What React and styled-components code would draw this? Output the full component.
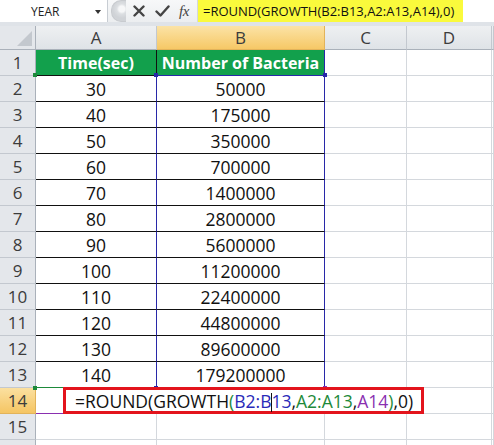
import React from "react";
import styled, { createGlobalStyle, css } from "styled-components";

const Global = createGlobalStyle`
  html, body { margin: 0; padding: 0; background: #fff; }
  body { width: 494px; height: 445px; overflow: hidden; font-family: "Open Sans", "Liberation Sans", sans-serif; }
`;

const Page = styled.div`
  width: 494px;
  height: 445px;
  overflow: hidden;
  display: flex;
  flex-direction: column;
  background: #fff;
`;

const FormulaBar = styled.div`
  height: 24px;
  display: flex;
  align-items: stretch;
  background: #fff;
  border-bottom: 4px solid #dfe3e8;
`;

const NameBox = styled.div`
  width: 108px;
  display: flex;
  align-items: center;
  justify-content: space-between;
  padding: 0 6px 0 31px;
  box-sizing: border-box;
  font-size: 12px;
  color: #222;
  background: #fff;
  border-right: 1px solid #c8cdd3;
`;

const Arrow = styled.span`
  width: 0;
  height: 0;
  border-left: 3.5px solid transparent;
  border-right: 3.5px solid transparent;
  border-top: 4px solid #333;
  margin-top: 2px;
`;

const Tools = styled.div`
  width: 89px;
  display: flex;
  align-items: center;
  background: linear-gradient(#f7f8f9, #eceef0);
  border-right: 1px solid #d4d8dc;
`;

const Knob = styled.div`
  width: 14px;
  height: 20px;
  margin-left: 3px;
  border-radius: 10px 0 0 10px;
  background: radial-gradient(circle at 70% 40%, #f6f7f8 0 3px, #dcdfe2 5px, #d0d3d7 9px);
  border: 1px solid #c8cbcf;
  border-right: none;
`;

const ToolIcon = styled.span`
  width: ${(p) => p.$w || 20}px;
  display: flex;
  align-items: center;
  justify-content: center;
  color: #444;
`;

const Fx = styled.span`
  font-family: "Liberation Serif", "DejaVu Serif", serif;
  font-style: italic;
  font-size: 15px;
  color: #444;
  letter-spacing: -0.5px;
`;

const FormulaInput = styled.div`
  width: 265px;
  background: #fafa3c;
  display: flex;
  align-items: center;
  padding-left: 5px;
  box-sizing: border-box;
  font-size: 13px;
  color: #111;
  white-space: nowrap;
  overflow: hidden;
`;

const Rest = styled.div`
  flex: 1;
  background: #fff;
`;

const Sheet = styled.div`
  display: grid;
  grid-template-columns: 36px 121px 168px 82px 85px 2px;
  grid-template-rows: 24px repeat(15, 26px) 26px;
`;

const lineColors = {
  grid: "#d4d8dd",
  black: "#111",
  blue: "#2828a8",
  green: "#1d8a3a",
  purple: "#8a2fb0",
  head: "#aab1ba",
};

const Cell = styled.div`
  position: relative;
  box-sizing: border-box;
  border-right: 1px solid ${(p) => lineColors[p.$r || "grid"]};
  border-bottom: 1px solid ${(p) => lineColors[p.$b || "grid"]};
  display: flex;
  align-items: center;
  justify-content: center;
  font-size: 17.5px;
  color: #111;
  white-space: nowrap;
  ${(p) =>
    p.$fill === "green" &&
    css`
      background: #12a04c;
      color: #fff;
      font-weight: 700;
      font-size: 16px;
    `}
`;

const HeadCell = styled.div`
  box-sizing: border-box;
  border-right: 1px solid ${(p) => (p.$sel ? "#e2b35a" : "#c3c8cf")};
  border-bottom: 1px solid ${(p) => (p.$sel ? "#e2b35a" : "#aab1ba")};
  background: ${(p) =>
    p.$sel
      ? "linear-gradient(#fbe3a6, #f6c866)"
      : "linear-gradient(#eef0f2, #dfe3e7)"};
  display: flex;
  align-items: center;
  justify-content: center;
  font-size: 17px;
  color: #3c3c3c;
`;

const RowHead = styled(HeadCell)`
  border-right: 1px solid ${(p) => (p.$sel ? "#e2b35a" : "#aab1ba")};
  border-bottom: 1px solid ${(p) => (p.$sel ? "#e2b35a" : "#c3c8cf")};
  background: ${(p) => (p.$sel ? "linear-gradient(#fbe0a0, #f5c563)" : "#e4e7eb")};
`;

const Corner = styled.div`
  box-sizing: border-box;
  background: #e4e7eb;
  border-right: 1px solid #aab1ba;
  border-bottom: 1px solid #aab1ba;
  display: flex;
  align-items: flex-end;
  justify-content: flex-end;
  padding: 0 3px 3px 0;
`;

const Triangle = styled.span`
  width: 0;
  height: 0;
  border-left: 15px solid transparent;
  border-bottom: 15px solid #c3c8ce;
`;

const Handle = styled.span`
  position: absolute;
  width: 4px;
  height: 4px;
  background: ${(p) => lineColors[p.$c]};
  ${(p) => (p.$y === "t" ? "top: -3px;" : "bottom: -3px;")}
  ${(p) => (p.$x === "l" ? "left: -3px;" : "right: -3px;")}
  z-index: 2;
`;

const EditBox = styled.div`
  position: absolute;
  left: -94px;
  top: -1px;
  width: 361px;
  height: 27px;
  box-sizing: border-box;
  border: 3px solid #e3141c;
  background: #fff;
  display: flex;
  align-items: center;
  padding-left: 9px;
  font-size: 17.5px;
  color: #111;
  z-index: 3;
`;

const Ref = styled.span`
  color: ${(p) => p.$c};
`;

const Caret = styled.span`
  display: inline-block;
  width: 1px;
  height: 19px;
  background: #111;
  vertical-align: middle;
  margin: 0 -0.5px;
`;

const data = [
  [30, 50000],
  [40, 175000],
  [50, 350000],
  [60, 700000],
  [70, 1400000],
  [80, 2800000],
  [90, 5600000],
  [100, 11200000],
  [110, 22400000],
  [120, 44800000],
  [130, 89600000],
  [140, 179200000],
];

const XIcon = () => (
  <svg width="12" height="12" viewBox="0 0 12 12">
    <path d="M1.5 1.5 L10.5 10.5 M10.5 1.5 L1.5 10.5" stroke="#444" strokeWidth="2.4" strokeLinecap="round" />
  </svg>
);

const CheckIcon = () => (
  <svg width="15" height="12" viewBox="0 0 15 12">
    <path d="M1.5 6.5 L5.5 10.5 L13.5 1.5" stroke="#444" strokeWidth="2.4" fill="none" strokeLinecap="round" strokeLinejoin="round" />
  </svg>
);

export default function App() {
  return (
    <Page>
      <Global />
      <FormulaBar>
        <NameBox>
          YEAR
          <Arrow />
        </NameBox>
        <Tools>
          <Knob />
          <ToolIcon $w={26}>
            <XIcon />
          </ToolIcon>
          <ToolIcon $w={20}>
            <CheckIcon />
          </ToolIcon>
          <ToolIcon $w={24}>
            <Fx>fx</Fx>
          </ToolIcon>
        </Tools>
        <FormulaInput>=ROUND(GROWTH(B2:B13,A2:A13,A14),0)</FormulaInput>
        <Rest />
      </FormulaBar>
      <Sheet>
        <Corner>
          <Triangle />
        </Corner>
        <HeadCell>A</HeadCell>
        <HeadCell $sel>B</HeadCell>
        <HeadCell>C</HeadCell>
        <HeadCell>D</HeadCell>
        <HeadCell />

        <RowHead>1</RowHead>
        <Cell $fill="green" $r="black" $b="black">
          Time(sec)
        </Cell>
        <Cell $fill="green" $r="blue" $b="blue">
          Number of Bacteria
        </Cell>
        <Cell />
        <Cell />
        <Cell />

        {data.map(([t, n], i) => {
          const last = i === data.length - 1;
          return (
            <React.Fragment key={t}>
              <RowHead>{i + 2}</RowHead>
              <Cell $r="blue" $b={last ? "green" : "black"}>
                {i === 0 && <Handle $c="green" $y="t" $x="l" />}
                {last && <Handle $c="green" $y="b" $x="l" />}
                {t}
              </Cell>
              <Cell $r="blue" $b={last ? "blue" : "black"}>
                {i === 0 && <Handle $c="blue" $y="t" $x="l" />}
                {i === 0 && <Handle $c="blue" $y="t" $x="r" />}
                {last && <Handle $c="blue" $y="b" $x="l" />}
                {last && <Handle $c="purple" $y="b" $x="r" />}
                {n}
              </Cell>
              <Cell />
              <Cell />
              <Cell />
            </React.Fragment>
          );
        })}

        <RowHead $sel>14</RowHead>
        <Cell $r="purple" $b="purple" />
        <Cell>
          <EditBox>
            =ROUND(GROWTH<Ref $c="#1d8a3a">(</Ref>
            <Ref $c="#2a2ab8">
              B2:B<Caret />13
            </Ref>
            ,<Ref $c="#1d8a3a">A2:A13</Ref>,<Ref $c="#8a2fb0">A14</Ref>
            <Ref $c="#1d8a3a">)</Ref>,0)
          </EditBox>
        </Cell>
        <Cell />
        <Cell />
        <Cell />

        <RowHead>15</RowHead>
        <Cell />
        <Cell />
        <Cell />
        <Cell />
        <Cell />

        <RowHead />
        <Cell />
        <Cell />
        <Cell />
        <Cell />
        <Cell />
      </Sheet>
    </Page>
  );
}
